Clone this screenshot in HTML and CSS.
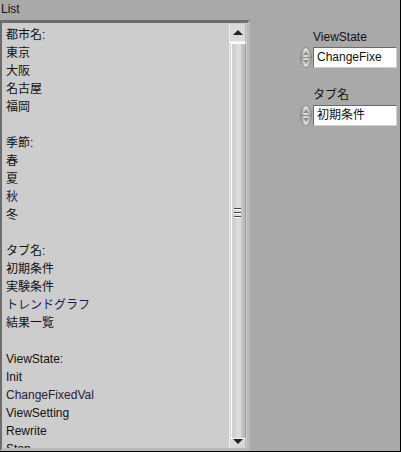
FILE: index.html
```html
<!DOCTYPE html>
<html>
<head>
<meta charset="utf-8">
<link rel="stylesheet" href="styles.css">
</head>
<body>
<div class="window">
  <div class="caption">List</div>
  <div class="main">
    <div class="listbox">
      <div class="items">
        <div class="item">都市名:</div>
        <div class="item">東京</div>
        <div class="item">大阪</div>
        <div class="item">名古屋</div>
        <div class="item">福岡</div>
        <div class="item"></div>
        <div class="item">季節:</div>
        <div class="item">春</div>
        <div class="item">夏</div>
        <div class="item blue">秋</div>
        <div class="item">冬</div>
        <div class="item"></div>
        <div class="item">タブ名:</div>
        <div class="item">初期条件</div>
        <div class="item">実験条件</div>
        <div class="item blue">トレンドグラフ</div>
        <div class="item">結果一覧</div>
        <div class="item"></div>
        <div class="item">ViewState:</div>
        <div class="item">Init</div>
        <div class="item purple">ChangeFixedVal</div>
        <div class="item">ViewSetting</div>
        <div class="item">Rewrite</div>
        <div class="item">Stop</div>
      </div>
      <div class="scrollbar">
        <div class="sbtn up"><span class="tri-up"></span></div>
        <div class="thumb"><div class="grip"><i></i><i></i><i></i></div></div>
        <div class="sbtn down"><span class="tri-down"></span></div>
      </div>
    </div>
    <div class="panel">
      <div class="field">
        <div class="flabel">ViewState</div>
        <div class="control">
          <svg class="spin" width="12" height="21" viewBox="0 0 12 21">
            <defs>
              <linearGradient id="g1" x1="0" x2="1" y1="0" y2="0">
                <stop offset="0" stop-color="#8c8c8c"/>
                <stop offset="0.45" stop-color="#e6e6e6"/>
                <stop offset="1" stop-color="#9a9a9a"/>
              </linearGradient>
            </defs>
            <ellipse cx="6" cy="10.5" rx="5.5" ry="10" fill="url(#g1)" stroke="#8a8a8a" stroke-width="1"/>
            <line x1="1" y1="10.5" x2="11" y2="10.5" stroke="#8a8a8a" stroke-width="1"/>
            <path d="M6 4 L8.5 8 L3.5 8 Z" fill="#8a8a8a"/>
            <path d="M6 17 L8.5 13 L3.5 13 Z" fill="#8a8a8a"/>
          </svg>
          <div class="box">ChangeFixe</div>
        </div>
      </div>
      <div class="field">
        <div class="flabel">タブ名</div>
        <div class="control">
          <svg class="spin" width="12" height="21" viewBox="0 0 12 21">
            <ellipse cx="6" cy="10.5" rx="5.5" ry="10" fill="url(#g1)" stroke="#8a8a8a" stroke-width="1"/>
            <line x1="1" y1="10.5" x2="11" y2="10.5" stroke="#8a8a8a" stroke-width="1"/>
            <path d="M6 4 L8.5 8 L3.5 8 Z" fill="#8a8a8a"/>
            <path d="M6 17 L8.5 13 L3.5 13 Z" fill="#8a8a8a"/>
          </svg>
          <div class="box">初期条件</div>
        </div>
      </div>
    </div>
  </div>
</div>
</body>
</html>
```
FILE: styles.css
```css
html, body {
  margin: 0;
  padding: 0;
}
body {
  width: 401px;
  height: 452px;
  overflow: hidden;
  font-family: "Liberation Sans", "Noto Sans CJK JP", sans-serif;
  font-size: 12px;
  color: #111;
}
.window {
  box-sizing: border-box;
  width: 401px;
  height: 452px;
  background: #a9a9a9;
  border-right: 1px solid #000;
  border-bottom: 1px solid #000;
  display: flex;
  flex-direction: column;
}
.caption {
  height: 20px;
  line-height: 18px;
  padding-left: 1px;
  color: #1a1020;
}
.main {
  display: flex;
  flex: 1;
  min-height: 0;
}
.listbox {
  box-sizing: border-box;
  width: 250px;
  height: 431px;
  background: #cdcdcd;
  border-top: 3px solid #6d6d6d;
  border-left: 2px solid #6d6d6d;
  border-right: 3px solid #b9b9b9;
  border-bottom: 3px solid #b9b9b9;
  display: flex;
}
.items {
  flex: 1;
  overflow: hidden;
  padding: 3px 0 0 4px;
}
.item {
  height: 18px;
  line-height: 18px;
  white-space: nowrap;
  color: #111;
}
.item.blue { color: #1a1a50; }
.item.purple { color: #2a1838; }
.scrollbar {
  width: 16px;
  margin: 1px 1px 0 0;
  display: flex;
  flex-direction: column;
  background: #d6d6d6;
  border-left: 1px solid #eeeeee;
}
.sbtn {
  height: 17px;
  display: flex;
  align-items: center;
  justify-content: center;
  background: #d9d9d9;
  border-right: 1px solid #b8b8b8;
}
.sbtn.up { border-bottom: 2px solid #f4f4f4; }
.sbtn.down { border-top: 1px solid #f4f4f4; height: 9px; align-items: flex-start; }
.tri-up {
  width: 0; height: 0;
  border-left: 5px solid transparent;
  border-right: 5px solid transparent;
  border-bottom: 5px solid #222;
}
.tri-down {
  width: 0; height: 0;
  border-left: 5px solid transparent;
  border-right: 5px solid transparent;
  border-top: 5px solid #222;
}
.thumb {
  flex: 1;
  margin: 0 0 0 1px;
  border-left: 1px solid #ffffff;
  border-top: 1px solid #ffffff;
  border-right: 1px solid #9c9c9c;
  background: linear-gradient(to right, #d0d0d0 0, #d0d0d0 4px, #dcdcdc 4px, #dcdcdc 9px, #c4c4c4 9px, #c4c4c4 11px, #bdbdbd 11px);
  display: flex;
  flex-direction: column;
  padding-top: 164px;
}
.grip {
  display: flex;
  flex-direction: column;
  gap: 2px;
  margin-left: 2px;
}
.grip i {
  display: block;
  width: 7px;
  height: 1px;
  background: #444;
  border-bottom: 1px solid #fff;
}
.panel {
  padding: 7px 0 0 50px;
  display: flex;
  flex-direction: column;
  gap: 17px;
}
.field {
  display: flex;
  flex-direction: column;
}
.flabel {
  padding-left: 13px;
  height: 20px;
  line-height: 20px;
  color: #111;
}
.control {
  display: flex;
  align-items: center;
  gap: 1px;
}
.spin {
  display: block;
}
.box {
  box-sizing: border-box;
  width: 84px;
  height: 21px;
  line-height: 18px;
  background: #fff;
  border: 1px solid #6a6a6a;
  border-right-color: #d0d0d0;
  border-bottom-color: #d0d0d0;
  padding-left: 3px;
  white-space: nowrap;
  overflow: hidden;
  color: #111;
}
```
